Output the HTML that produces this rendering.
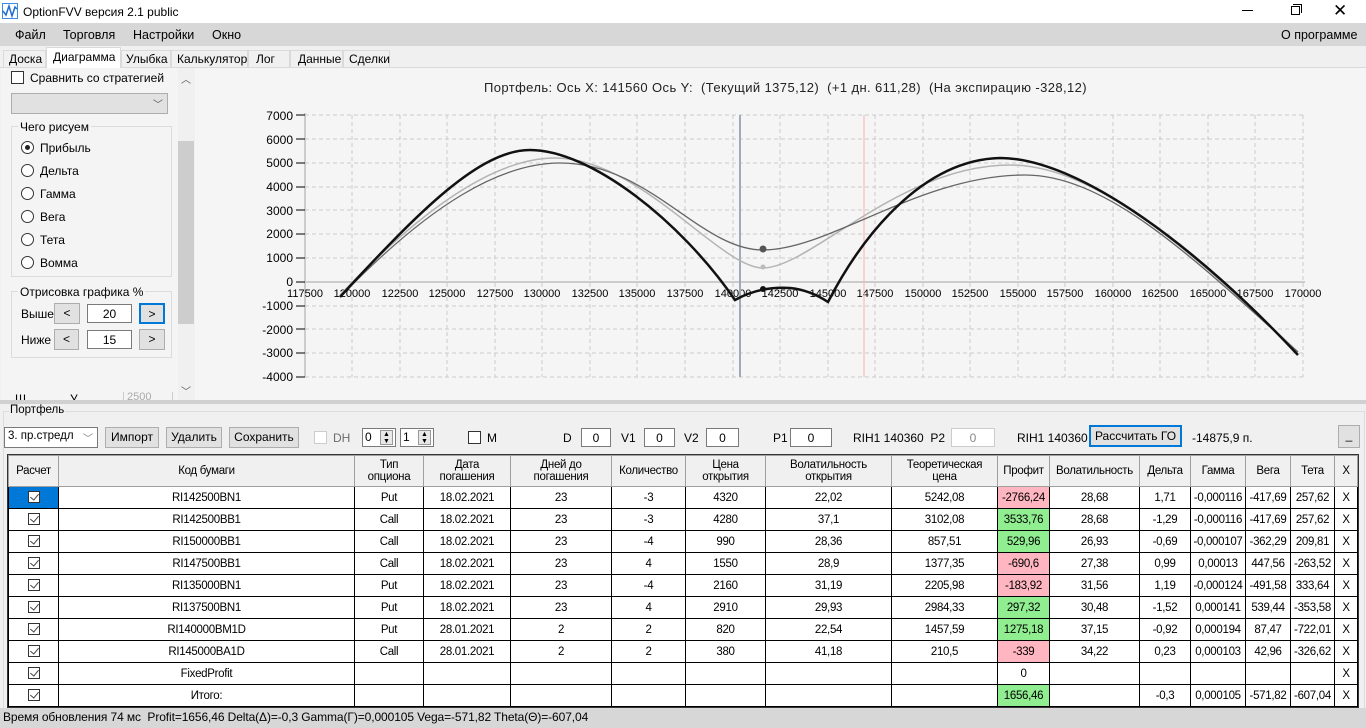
<!DOCTYPE html>
<html><head><meta charset="utf-8"><style>
*{box-sizing:border-box;margin:0;padding:0}
body{width:1366px;height:728px;overflow:hidden;background:#f0f0f0;font-family:"Liberation Sans",sans-serif;font-size:12px;color:#000;position:relative}
.a{position:absolute}
.btn{position:absolute;background:#e1e1e1;border:1px solid #adadad;text-align:center;font-size:12px;line-height:18px}
.box{position:absolute;background:#fff;border:1px solid #7a7a7a;text-align:center;font-size:12px;line-height:18px}
table{border-collapse:collapse;table-layout:fixed;font-size:11.5px;letter-spacing:-0.3px}
td{border:1px solid #000;text-align:center;height:22px;padding:0;white-space:nowrap;overflow:hidden;background:#fff}
th{border:1px solid #a0a0a0;font-weight:normal;background:#f0f0f0;height:31px;line-height:12px;font-size:11.5px}
.r{background:#ffb6c1}.g{background:#90ee90}
.cb{display:inline-block;width:12px;height:12px;border:1px solid #333;background:#fff;vertical-align:middle;position:relative}
.cb:after{content:"";position:absolute;left:3px;top:0px;width:4px;height:7px;border:solid #444;border-width:0 1px 1px 0;transform:rotate(40deg)}
.rad{position:absolute;width:13px;height:13px;border:1px solid #333;border-radius:50%;background:#fff}
</style></head><body>
<div class="a" style="left:0;top:0;width:1366px;height:23px;background:#fff"></div>
<svg class="a" style="left:2px;top:3px" width="16" height="16"><rect x="0.5" y="0.5" width="15" height="15" fill="#fff" stroke="#3a8ee6"/><polyline points="1,8 4,12 7,3 10,13 13,4 15,6" fill="none" stroke="#1e6fd0" stroke-width="1.5"/></svg>
<div class="a" style="left:23px;top:5px;font-size:12px">OptionFVV версия 2.1 public</div>
<div class="a" style="left:1242px;top:10px;width:11px;height:1px;background:#000"></div>
<div class="a" style="left:1291px;top:6px;width:9px;height:9px;border:1px solid #000"></div>
<div class="a" style="left:1293px;top:4px;width:9px;height:9px;border-top:1px solid #000;border-right:1px solid #000"></div>
<div class="a" style="left:1333px;top:1px;font-size:17px">✕</div>
<div class="a" style="left:0;top:23px;width:1366px;height:23px;background:#d7d7d7"></div>
<div class="a" style="left:15px;top:28px;font-size:12.5px">Файл</div>
<div class="a" style="left:63px;top:28px;font-size:12.5px">Торговля</div>
<div class="a" style="left:133px;top:28px;font-size:12.5px">Настройки</div>
<div class="a" style="left:212px;top:28px;font-size:12.5px">Окно</div>
<div class="a" style="left:1281px;top:28px;font-size:12.5px">О программе</div>
<div class="a" style="left:0;top:67px;width:1366px;height:1px;background:#dadada"></div>
<div class="a" style="left:3px;top:50px;width:43px;height:18px;border:1px solid #dadada;background:#f0f0f0;padding:1px 5px">Доска</div>
<div class="a" style="left:46px;top:47px;width:75px;height:21px;border:1px solid #dadada;border-bottom:none;background:#fff;padding:2px 6px">Диаграмма</div>
<div class="a" style="left:121px;top:50px;width:50px;height:18px;border:1px solid #dadada;padding:1px 4px">Улыбка</div>
<div class="a" style="left:171px;top:50px;width:77px;height:18px;border:1px solid #dadada;padding:1px 5px">Калькулятор</div>
<div class="a" style="left:248px;top:50px;width:42px;height:18px;border:1px solid #dadada;padding:1px 7px">Лог</div>
<div class="a" style="left:290px;top:50px;width:53px;height:18px;border:1px solid #dadada;padding:1px 7px">Данные</div>
<div class="a" style="left:343px;top:50px;width:47px;height:18px;border:1px solid #dadada;padding:1px 5px">Сделки</div>
<div class="a" style="left:1px;top:68px;width:193px;height:332px;background:#f4f4f4"></div>
<div class="a" style="left:11px;top:71px;width:13px;height:13px;border:1px solid #333;background:#fff"></div>
<div class="a" style="left:30px;top:71px">Сравнить со стратегией</div>
<div class="a" style="left:11px;top:93px;width:157px;height:21px;border:1px solid #adadad;background:#e1e1e1"></div>
<div class="a" style="left:153px;top:96px;font-size:10px;color:#555">﹀</div>
<div class="a" style="left:11px;top:126px;width:161px;height:151px;border:1px solid #dcdcdc"></div>
<div class="a" style="left:18px;top:120px;background:#f4f4f4;padding:0 2px">Чего рисуем</div>
<div class="rad" style="left:21px;top:141px"><div style="position:absolute;left:3px;top:3px;width:5px;height:5px;border-radius:50%;background:#222"></div></div>
<div class="a" style="left:40px;top:141px">Прибыль</div>
<div class="rad" style="left:21px;top:164px"></div><div class="a" style="left:40px;top:164px">Дельта</div>
<div class="rad" style="left:21px;top:187px"></div><div class="a" style="left:40px;top:187px">Гамма</div>
<div class="rad" style="left:21px;top:210px"></div><div class="a" style="left:40px;top:210px">Вега</div>
<div class="rad" style="left:21px;top:233px"></div><div class="a" style="left:40px;top:233px">Тета</div>
<div class="rad" style="left:21px;top:256px"></div><div class="a" style="left:40px;top:256px">Вомма</div>
<div class="a" style="left:11px;top:291px;width:161px;height:67px;border:1px solid #dcdcdc"></div>
<div class="a" style="left:18px;top:285px;background:#f4f4f4;padding:0 2px">Отрисовка графика %</div>
<div class="a" style="left:21px;top:307px">Выше</div>
<div class="btn" style="left:54px;top:303px;width:26px;height:21px">&lt;</div>
<div class="box" style="left:87px;top:304px;width:45px;height:19px">20</div>
<div class="btn" style="left:139px;top:303px;width:26px;height:21px;border:2px solid #0078d7">&gt;</div>
<div class="a" style="left:21px;top:333px">Ниже</div>
<div class="btn" style="left:54px;top:329px;width:25px;height:21px">&lt;</div>
<div class="box" style="left:87px;top:330px;width:45px;height:19px">15</div>
<div class="btn" style="left:139px;top:329px;width:26px;height:21px">&gt;</div>
<div class="a" style="left:1px;top:392px;width:177px;height:8px;overflow:hidden"><div style="position:absolute;left:14px;top:0;font-size:12px">Ш</div><div style="position:absolute;left:69px;top:0">У</div><div style="position:absolute;left:122px;top:-2px;width:50px;height:12px;border:1px solid #ccc;color:#aaa;font-size:11px;padding-left:3px">2500</div></div>
<div class="a" style="left:178px;top:68px;width:16px;height:332px;background:#f0f0f0"></div>
<div class="a" style="left:178px;top:141px;width:16px;height:183px;background:#cdcdcd"></div>
<div class="a" style="left:181px;top:71px;font-size:10px;color:#555">︿</div>
<div class="a" style="left:181px;top:383px;font-size:10px;color:#555">﹀</div>
<div class="a" style="left:195px;top:68px;width:1171px;height:332px;background:#f5f5f5"></div>
<div class="a" style="left:484px;top:80px;font-size:13px;letter-spacing:0.4px;color:#222;white-space:nowrap">Портфель: Ось X: 141560 Ось Y:&nbsp; (Текущий 1375,12)&nbsp; (+1 дн. 611,28)&nbsp; (На экспирацию -328,12)</div>
<svg class="a" style="left:0;top:0" width="1366" height="400" font-family="Liberation Sans" font-size="12" fill="#000">
<g stroke="#ccc" stroke-dasharray="4,3" stroke-width="1">
<line x1="305" y1="115" x2="1305" y2="115"/><line x1="305" y1="139" x2="1305" y2="139"/><line x1="305" y1="163" x2="1305" y2="163"/><line x1="305" y1="187" x2="1305" y2="187"/><line x1="305" y1="210" x2="1305" y2="210"/><line x1="305" y1="234" x2="1305" y2="234"/><line x1="305" y1="258" x2="1305" y2="258"/><line x1="305" y1="306" x2="1305" y2="306"/><line x1="305" y1="329" x2="1305" y2="329"/><line x1="305" y1="353" x2="1305" y2="353"/><line x1="305" y1="377" x2="1305" y2="377"/>
<line x1="352" y1="115" x2="352" y2="377"/><line x1="400" y1="115" x2="400" y2="377"/><line x1="447" y1="115" x2="447" y2="377"/><line x1="495" y1="115" x2="495" y2="377"/><line x1="542" y1="115" x2="542" y2="377"/><line x1="590" y1="115" x2="590" y2="377"/><line x1="637" y1="115" x2="637" y2="377"/><line x1="685" y1="115" x2="685" y2="377"/><line x1="733" y1="115" x2="733" y2="377"/><line x1="780" y1="115" x2="780" y2="377"/><line x1="828" y1="115" x2="828" y2="377"/><line x1="875" y1="115" x2="875" y2="377"/><line x1="923" y1="115" x2="923" y2="377"/><line x1="970" y1="115" x2="970" y2="377"/><line x1="1018" y1="115" x2="1018" y2="377"/><line x1="1065" y1="115" x2="1065" y2="377"/><line x1="1113" y1="115" x2="1113" y2="377"/><line x1="1160" y1="115" x2="1160" y2="377"/><line x1="1208" y1="115" x2="1208" y2="377"/><line x1="1255" y1="115" x2="1255" y2="377"/><line x1="1303" y1="115" x2="1303" y2="377"/>
</g>
<line x1="305" y1="282" x2="1305" y2="282" stroke="#ccc" stroke-width="2"/>
<line x1="305" y1="113" x2="305" y2="377" stroke="#ccc" stroke-width="2"/>
<g stroke="#000"><line x1="296" y1="115" x2="305" y2="115"/><line x1="296" y1="139" x2="305" y2="139"/><line x1="296" y1="163" x2="305" y2="163"/><line x1="296" y1="187" x2="305" y2="187"/><line x1="296" y1="210" x2="305" y2="210"/><line x1="296" y1="234" x2="305" y2="234"/><line x1="296" y1="258" x2="305" y2="258"/><line x1="296" y1="282" x2="305" y2="282"/><line x1="296" y1="306" x2="305" y2="306"/><line x1="296" y1="329" x2="305" y2="329"/><line x1="296" y1="353" x2="305" y2="353"/><line x1="296" y1="377" x2="305" y2="377"/></g>
<g text-anchor="end"><text x="293" y="120">7000</text><text x="293" y="144">6000</text><text x="293" y="167">5000</text><text x="293" y="191">4000</text><text x="293" y="215">3000</text><text x="293" y="238">2000</text><text x="293" y="262">1000</text><text x="293" y="286">0</text><text x="293" y="310">-1000</text><text x="293" y="334">-2000</text><text x="293" y="357">-3000</text><text x="293" y="381">-4000</text></g>
<g text-anchor="middle" font-size="11"><text x="305" y="297">117500</text><text x="352" y="297">120000</text><text x="400" y="297">122500</text><text x="447" y="297">125000</text><text x="495" y="297">127500</text><text x="542" y="297">130000</text><text x="590" y="297">132500</text><text x="637" y="297">135000</text><text x="685" y="297">137500</text><text x="733" y="297">140000</text><text x="780" y="297">142500</text><text x="828" y="297">145000</text><text x="875" y="297">147500</text><text x="923" y="297">150000</text><text x="970" y="297">152500</text><text x="1018" y="297">155000</text><text x="1065" y="297">157500</text><text x="1113" y="297">160000</text><text x="1160" y="297">162500</text><text x="1208" y="297">165000</text><text x="1255" y="297">167500</text><text x="1303" y="297">170000</text></g>
<line x1="740" y1="115" x2="740" y2="377" stroke="#a0aab8" stroke-width="2"/>
<line x1="864" y1="115" x2="864" y2="377" stroke="#ffb0b0" stroke-width="1"/>
<g fill="none">
<path d="M340,295 C430,200 500,158 555,158 C640,158 720,268 763,268 C810,268 900,165 1010,165 C1100,165 1200,260 1298,352" stroke="#b4b4b4" stroke-width="1.5"/>
<path d="M345,292 C430,205 500,163 560,163 C650,163 700,250 763,250 C830,250 920,175 1025,175 C1110,175 1200,265 1298,352" stroke="#666" stroke-width="1.3"/>
<path d="M340,297 C420,210 480,150 530,150 C590,150 680,220 735,300 Q760,286 790,288 Q810,290 828,302 C860,240 920,160 1000,158 C1080,158 1200,250 1298,355" stroke="#111" stroke-width="2.5"/>
</g>
<circle cx="763" cy="249" r="3.5" fill="#555"/><circle cx="763" cy="267" r="2.5" fill="#bbb"/><circle cx="763" cy="289" r="3" fill="#111"/>
</svg>
<div class="a" style="left:0;top:400px;width:1366px;height:4px;background:#d0d0d0"></div>
<div class="a" style="left:3px;top:411px;width:1362px;height:300px;border:1px solid #dcdcdc"></div>
<div class="a" style="left:9px;top:404px;font-size:11.5px;background:#f0f0f0;padding:0 1px">Портфель</div>
<div class="a" style="left:4px;top:427px;width:94px;height:21px;border:1px solid #7a7a7a;background:#fff;padding:2px 3px;font-size:11.5px">3. пр.стредл <span style="position:absolute;right:4px;color:#777;font-size:10px">﹀</span></div>
<div class="btn" style="left:105px;top:427px;width:54px;height:21px">Импорт</div>
<div class="btn" style="left:166px;top:427px;width:56px;height:21px">Удалить</div>
<div class="btn" style="left:229px;top:427px;width:70px;height:21px">Сохранить</div>
<div class="a" style="left:314px;top:431px;width:13px;height:13px;border:1px solid #ccc;background:#fff"></div>
<div class="a" style="left:333px;top:431px;color:#6d6d6d">DH</div>
<div class="a" style="left:362px;top:428px;width:34px;height:19px;border:1px solid #7a7a7a;background:#fff;padding:1px 2px">0</div>
<div class="a" style="left:380px;top:430px;width:13px;height:15px;border:1px solid #999;background:#e8e8e8;font-size:7px;line-height:7px;text-align:center">▲<br>▼</div>
<div class="a" style="left:400px;top:428px;width:34px;height:19px;border:1px solid #7a7a7a;background:#fff;padding:1px 2px">1</div>
<div class="a" style="left:418px;top:430px;width:13px;height:15px;border:1px solid #999;background:#e8e8e8;font-size:7px;line-height:7px;text-align:center">▲<br>▼</div>
<div class="a" style="left:468px;top:431px;width:13px;height:13px;border:1px solid #333;background:#fff"></div>
<div class="a" style="left:487px;top:431px">M</div>
<div class="a" style="left:563px;top:431px">D</div><div class="box" style="left:581px;top:428px;width:30px;height:19px">0</div>
<div class="a" style="left:621px;top:431px">V1</div><div class="box" style="left:644px;top:428px;width:31px;height:19px">0</div>
<div class="a" style="left:684px;top:431px">V2</div><div class="box" style="left:706px;top:428px;width:33px;height:19px">0</div>
<div class="a" style="left:773px;top:431px">P1</div><div class="box" style="left:790px;top:428px;width:42px;height:19px">0</div>
<div class="a" style="left:853px;top:431px">RIH1 140360&nbsp; P2</div>
<div class="box" style="left:951px;top:428px;width:44px;height:19px;border-color:#ccc;color:#888">0</div>
<div class="a" style="left:1017px;top:431px">RIH1 140360</div>
<div class="btn" style="left:1089px;top:425px;width:93px;height:22px;border:2px solid #0078d7">Рассчитать ГО</div>
<div class="a" style="left:1192px;top:431px">-14875,9 п.</div>
<div class="btn" style="left:1338px;top:425px;width:22px;height:23px">_</div>
<div class="a" style="left:7px;top:454px;width:1352px;height:254px;border:1px solid #333;background:#fff"></div>
<table class="a" style="left:8px;top:455px;width:1349px">
<colgroup><col style="width:50px"><col style="width:296px"><col style="width:69px"><col style="width:87px"><col style="width:101px"><col style="width:74px"><col style="width:80px"><col style="width:126px"><col style="width:106px"><col style="width:52px"><col style="width:90px"><col style="width:51px"><col style="width:55px"><col style="width:45px"><col style="width:44px"><col style="width:23px"></colgroup>
<tr><th>Расчет</th><th>Код бумаги</th><th>Тип<br>опциона</th><th>Дата<br>погашения</th><th>Дней до<br>погашения</th><th>Количество</th><th>Цена<br>открытия</th><th>Волатильность<br>открытия</th><th>Теоретическая<br>цена</th><th>Профит</th><th>Волатильность</th><th>Дельта</th><th>Гамма</th><th>Вега</th><th>Тета</th><th>X</th></tr>
<tr><td style="background:#0078d7"><span class="cb"></span></td><td>RI142500BN1</td><td>Put</td><td>18.02.2021</td><td>23</td><td>-3</td><td>4320</td><td>22,02</td><td>5242,08</td><td class="r">-2766,24</td><td>28,68</td><td>1,71</td><td>-0,000116</td><td>-417,69</td><td>257,62</td><td>X</td></tr>
<tr><td><span class="cb"></span></td><td>RI142500BB1</td><td>Call</td><td>18.02.2021</td><td>23</td><td>-3</td><td>4280</td><td>37,1</td><td>3102,08</td><td class="g">3533,76</td><td>28,68</td><td>-1,29</td><td>-0,000116</td><td>-417,69</td><td>257,62</td><td>X</td></tr>
<tr><td><span class="cb"></span></td><td>RI150000BB1</td><td>Call</td><td>18.02.2021</td><td>23</td><td>-4</td><td>990</td><td>28,36</td><td>857,51</td><td class="g">529,96</td><td>26,93</td><td>-0,69</td><td>-0,000107</td><td>-362,29</td><td>209,81</td><td>X</td></tr>
<tr><td><span class="cb"></span></td><td>RI147500BB1</td><td>Call</td><td>18.02.2021</td><td>23</td><td>4</td><td>1550</td><td>28,9</td><td>1377,35</td><td class="r">-690,6</td><td>27,38</td><td>0,99</td><td>0,00013</td><td>447,56</td><td>-263,52</td><td>X</td></tr>
<tr><td><span class="cb"></span></td><td>RI135000BN1</td><td>Put</td><td>18.02.2021</td><td>23</td><td>-4</td><td>2160</td><td>31,19</td><td>2205,98</td><td class="r">-183,92</td><td>31,56</td><td>1,19</td><td>-0,000124</td><td>-491,58</td><td>333,64</td><td>X</td></tr>
<tr><td><span class="cb"></span></td><td>RI137500BN1</td><td>Put</td><td>18.02.2021</td><td>23</td><td>4</td><td>2910</td><td>29,93</td><td>2984,33</td><td class="g">297,32</td><td>30,48</td><td>-1,52</td><td>0,000141</td><td>539,44</td><td>-353,58</td><td>X</td></tr>
<tr><td><span class="cb"></span></td><td>RI140000BM1D</td><td>Put</td><td>28.01.2021</td><td>2</td><td>2</td><td>820</td><td>22,54</td><td>1457,59</td><td class="g">1275,18</td><td>37,15</td><td>-0,92</td><td>0,000194</td><td>87,47</td><td>-722,01</td><td>X</td></tr>
<tr><td><span class="cb"></span></td><td>RI145000BA1D</td><td>Call</td><td>28.01.2021</td><td>2</td><td>2</td><td>380</td><td>41,18</td><td>210,5</td><td class="r">-339</td><td>34,22</td><td>0,23</td><td>0,000103</td><td>42,96</td><td>-326,62</td><td>X</td></tr>
<tr><td><span class="cb"></span></td><td>FixedProfit</td><td></td><td></td><td></td><td></td><td></td><td></td><td></td><td>0</td><td></td><td></td><td></td><td></td><td></td><td>X</td></tr>
<tr><td><span class="cb"></span></td><td>Итого:</td><td></td><td></td><td></td><td></td><td></td><td></td><td></td><td class="g">1656,46</td><td></td><td>-0,3</td><td>0,000105</td><td>-571,82</td><td>-607,04</td><td>X</td></tr>
</table>
<div class="a" style="left:0;top:708px;width:1366px;height:20px;background:#d7d7d7"></div>
<div class="a" style="left:3px;top:710px;font-size:12px;letter-spacing:-0.1px;white-space:nowrap">Время обновления 74 мс&nbsp; Profit=1656,46 Delta(Δ)=-0,3 Gamma(Γ)=0,000105 Vega=-571,82 Theta(Θ)=-607,04</div>
</body></html>
